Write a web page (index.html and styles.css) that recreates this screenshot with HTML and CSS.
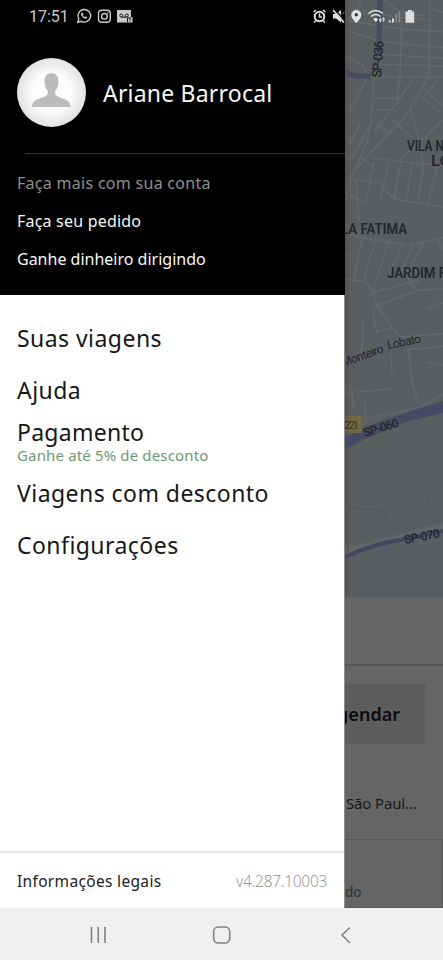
FILE: index.html
```html
<!DOCTYPE html>
<html lang="pt-BR">
<head>
<meta charset="utf-8">
<title>Menu</title>
<link rel="stylesheet" href="styles.css">
</head>
<body>
<div class="screen">
  <div class="content">
    <aside class="drawer">
      <header class="profile">
        <div class="user">
          <svg class="avatar" viewBox="0 0 69 69">
            <defs><radialGradient id="glow"><stop offset="0" stop-color="#fff"/><stop offset=".55" stop-color="#fcfcfc"/><stop offset="1" stop-color="#e2e2e2"/></radialGradient></defs>
            <circle cx="34.5" cy="34.5" r="34.5" fill="url(#glow)"/>
            <path d="M34.500 15c-4.500 0-7 3.500-7 8.500 0 4.500 1.500 7.500 3.200 9.500v3.500c-.5 1.500-5 2.800-9 4.300-4.700 1.700-6.700 4-6.700 8.200h38.500c0-4.200-2-6.500-6.700-8.200-4-1.500-8-2.800-8.500-4.300V33c1.700-2 3.200-5 3.200-9.500 0-5-2.500-8.500-7-8.500z" fill="#bcbcbc"/>
          </svg>
          <span class="name">Ariane Barrocal</span>
        </div>
        <div class="more">
          <p class="more-title">Faça mais com sua conta</p>
          <p class="order">Faça seu pedido</p>
          <p class="earn">Ganhe dinheiro dirigindo</p>
        </div>
      </header>
      <nav class="menu">
        <a class="item trips">Suas viagens</a>
        <a class="item help">Ajuda</a>
        <a class="item pay">Pagamento<small>Ganhe até 5% de desconto</small></a>
        <a class="item deals">Viagens com desconto</a>
        <a class="item settings">Configurações</a>
      </nav>
      <footer class="legal"><span class="legal-link">Informações legais</span><span class="version">v4.287.10003</span></footer>
    </aside>
    <main class="behind">
      <svg class="map" viewBox="345 0 98 597">
        <rect x="345" width="98" height="597" fill="#5b5e60"/>
        <g class="streets">
          <path d="M345 30L380 41L443 48M345 20L400 29L443 32M350 12L430 20M361 0L356 13L345 20M345 56L362 64L368 77H443M372 54L443 58M375 64L443 66M402 10L400 75L397 100M430 0L429 76M443 12L428 8M385 0L400 13L425 16"/>
          <path d="M374 76L371 122L368 140L352 176L346 200M372 98H401M376 110H395M428 78L404 118L373 150L350 176M412 80L396 104L374 132M372 122L352 158M346 118L366 80M361 122L350 144L345 130M410 108L420 142L424 176M376 125L392 133M392 120L412 138M443 120L420 142L400 160M424 88L443 106M419 94L439 112M438 80L424 96"/>
          <path d="M345 178L378 183L394 199L443 207M370 158L443 166M374 162L366 202M389 162L380 202M401 162L394 198M412 163L406 202M424 164L418 202M437 166L428 205M345 192L366 203M356 180L359 220M362 158L377 170"/>
          <path d="M345 233L371 240L409 245L443 238M345 222L357 238L362 228M363 236L354 278M376 238L363 282M389 241L375 284M402 245L388 277M413 245L399 277M424 243L407 274M438 240L443 250M352 253L346 255M345 279L367 282L378 307L399 337M374 292L420 280M378 305L420 290L443 289M408 277L417 291M370 285L377 295"/>
          <path d="M378 303L373 312L377 335M363 318L362 358M376 332L392 327M408 350L413 385L417 400M399 337L443 334M407 350L443 346M427 362L443 365M391 354L392 374M345 393L392 389M352 392L354 410M364 398L366 418M443 303L427 308"/>
        </g>
        <path d="M345 438L370 418L416 409L443 394" fill="none" stroke="#616466" stroke-width="3"/>
        <path d="M345 551Q390 540 412 534L443 526" fill="none" stroke="#626567" stroke-width="6"/>
        <g fill="none" stroke="#434661">
          <path d="M380 0L379 55M345 71Q348 75 356 76H371" stroke-width="5.500" opacity=".75"/>
          <path d="M345 557Q370 545 400 540L443 531" stroke-width="4"/>
        </g>
        <path d="M345 437L363 428L401 414L443 401V413L405 422L363 440L345 449Z" fill="#474a63"/>
        <path d="M345 507L362 509L382 510L386 516L390 524M443 480L438 490M430 494L427 505" fill="none" stroke="#4d5357" stroke-width=".8"/>
        <rect x="340" y="416" width="22" height="17" rx="2" fill="#726a3e"/>
        <rect x="345" width="4" height="597" fill="#4c5052" opacity=".4"/>
        <g class="labels">
          <text transform="translate(381 78) rotate(-86)" textLength="37" font-size="13">SP-036</text>
          <text class="district" x="407" y="151" textLength="45" lengthAdjust="spacingAndGlyphs">VILA NO</text>
          <text class="district" x="431" y="166" textLength="20" lengthAdjust="spacingAndGlyphs">LO</text>
          <text class="district" x="341" y="234" textLength="66" lengthAdjust="spacingAndGlyphs">LA FATIMA</text>
          <text class="district" x="387" y="278" textLength="59" lengthAdjust="spacingAndGlyphs">JARDIM F</text>
          <text class="street" transform="translate(343 367) rotate(-20)" textLength="44">Monteiro</text>
          <text class="street" transform="translate(388 349) rotate(-11)" textLength="34">Lobato</text>
          <text class="shield" x="344" y="429" font-size="11" textLength="15">221</text>
          <text transform="translate(365 437) rotate(-17)" font-size="12" textLength="36">SP-060</text>
          <text transform="translate(405 544) rotate(-11)" font-size="12" textLength="36">SP-070</text>
        </g>
      </svg>
      <section class="sheet">
        <div class="search"></div>
        <div class="schedule"><div class="schedule-btn"><span>Agendar</span></div></div>
        <div class="place">São Paul...</div>
        <div class="tab">do</div>
      </section>
    </main>
  </div>
  <div class="system-nav">
    <svg viewBox="0 0 443 52" fill="none" stroke="#818181" stroke-width="1.600">
      <path d="M91.500 19v16M98.300 19v16M105 19v16M350 19.500l-8 7.500 8 8"/>
      <rect x="213.700" y="19" width="16" height="16" rx="4.500"/>
    </svg>
  </div>
  <div class="status">
    <span class="clock">17:51</span>
    <svg viewBox="70 0 373 32" fill="none" stroke="#c9c9c9">
      <path d="M77.700 22.500l1.100-3.700a6.300 6.300 0 1 1 2.500 2.500z" stroke-width="1.400"/>
      <path d="M81.500 12.800c-.8 1-.5 2.500 1 4.100 1.500 1.500 3.200 2.200 4.300 1.400l.5-1-1.700-1-1 .7c-.8-.4-1.500-1.100-1.800-1.800l.7-.8-.8-1.700z" fill="#c9c9c9" stroke="none"/>
      <rect x="98.500" y="10.300" width="11.800" height="12" rx="3.300" stroke-width="1.400"/><circle cx="104.400" cy="16.300" r="2.800" stroke-width="1.400"/><circle cx="107.700" cy="13" r=".8" fill="#c9c9c9" stroke="none"/>
      <path d="M117 10h14v7h1.500v5.500H117z" fill="#c9c9c9" stroke="none"/><g stroke="#111"><circle cx="121.300" cy="15.500" r="1.500"/><circle cx="126.800" cy="15.500" r="1.500"/><path d="M121.300 17.200h5.500M127.500 22v-4h3.700"/></g><path d="M130 18.500v3" stroke="#111" stroke-width=".8"/>
      <g stroke="#dfdfdf"><circle cx="319.500" cy="16.500" r="4.800" stroke-width="2"/><path d="M319.500 13.500v3.500h2.500M313.500 12l2.500-2M325.500 12l-2.500-2M314 22.500l2-2M325 22.500l-2-2" stroke-width="1.500"/></g>
      <path d="M333 14h3l5-4v12.500l-5-4h-3z" fill="#dfdfdf" stroke="none"/><path d="M334.500 9l11 13" stroke="#111" stroke-width="1.500"/><path d="M333 10l11 12.500" stroke="#dfdfdf" stroke-width="1.700"/><path d="M342.500 14l1.800-2" stroke="#aaa"/>
      <path d="M356.300 10a5 5 0 0 0-5 5c0 3.500 5 8 5 8s5-4.500 5-8a5 5 0 0 0-5-5z" fill="#e2e2e2" stroke="none"/><circle cx="356.300" cy="14.800" r="1.800" fill="#3c3e40" stroke="none"/>
      <g stroke="#e2e2e2" stroke-width="1.500"><path d="M368.500 13.500q7-6 14.500 0M371 16.500q5-4 9.500 0"/></g><path d="M373 19q2.500-2 5 0L376 22.300zM379 20l1.300-2.500 1.400 2.500zM378.800 20.200h3l-1.500 2.400zM382 19.500h3l-1.500 2.500zM382 19l1.500-2 1.500 2z" fill="#e2e2e2" stroke="none"/>
      <g stroke-width="2"><path d="M389.700 22.500V20.500M393 22.500v-4" stroke="#dedede"/><path d="M396.200 22.500v-9M399.300 22.500v-11" stroke="#8b8d8f" stroke-width="1.500"/></g>
      <path d="M405.500 11.500h2.500V10h4v1.500h2.200v11.300h-8.700z" fill="#dedede" stroke="none"/>
    </svg>
  </div>
</div>
</body>
</html>
```
FILE: styles.css
```css
* { box-sizing: border-box; }
body { margin: 0; font-family: "Noto Sans", sans-serif; }
p { margin: 0; }
.screen { position: relative; width: 443px; height: 960px; overflow: hidden; display: flex; flex-direction: column; background: #f0f0f0; }
.content { height: 908px; display: flex; }
.drawer { width: 345px; flex: none; display: flex; flex-direction: column; background: #fff; border-right: 1px solid #8e8e8e; white-space: nowrap; }
.profile { height: 295px; margin-right: -1px; padding-top: 58px; background: #000; color: #f7f7f7; }
.user { display: flex; align-items: center; height: 69px; padding-left: 17px; gap: 17px; }
.avatar { width: 69px; height: 69px; }
.name { font-size: 23px; letter-spacing: .2px; }
.more { margin: 26px 0 0 25px; border-top: 1px solid #343434; padding-top: 10px; font-size: 16px; line-height: 38px; }
.more p { margin-left: -8px; }
.more-title { color: #8f8f8f; letter-spacing: .29px; }
.order { letter-spacing: .2px; }
.menu { flex: 1; padding: 17px 0 0 17px; color: #171717; }
.item { display: block; height: 52px; line-height: 52px; font-size: 23px; letter-spacing: .45px; }
.pay { height: 51px; line-height: 32px; letter-spacing: .27px; }
.pay small { display: block; font-size: 15px; line-height: 14px; letter-spacing: .15px; color: #6b9a70; }
.legal { height: 57px; border-top: 2px solid #e7e7e7; padding: 1px 17px 0; display: flex; justify-content: space-between; align-items: center; font-size: 15.5px; color: #222; }
.legal-link { letter-spacing: .33px; }
.version { font-weight: 300; letter-spacing: -.3px; color: #999; }
.behind { width: 98px; overflow: hidden; background: #656565; }
.map { display: block; width: 98px; height: 597px; font-family: Roboto, sans-serif; }
.streets { fill: none; stroke: #65686a; stroke-width: 1.6; }
.labels { fill: #25272d; font-weight: 500; }
.district { font-size: 14px; font-weight: 600; }
.street { font-size: 12px; font-weight: 400; }
.shield { font-weight: 400; fill: #35332a; }
.sheet { height: 311px; display: flex; flex-direction: column; color: #1a1a1a; white-space: nowrap; }
.search { height: 69px; border-bottom: 2px solid #555; }
.schedule { height: 96px; padding-top: 18px; }
.schedule-btn { width: 81px; height: 60px; background: #5d5d5d; display: flex; align-items: center; justify-content: flex-end; padding-right: 26px; overflow: hidden; font-size: 18px; font-weight: 600; color: #0c0c0c; }
.place { height: 78px; line-height: 82px; padding-left: 1px; font-size: 15px; letter-spacing: -.15px; border-bottom: 1px solid #555; }
.tab { flex: 1; padding-top: 42px; font-size: 13.5px; line-height: 20px; font-weight: 500; color: #373737; border-bottom: 1px solid #555; border-right: 1px solid #555; }
.system-nav { height: 52px; }
.system-nav svg { display: block; width: 443px; height: 52px; }
.status { position: absolute; top: 0; left: 0; width: 443px; height: 32px; display: flex; color: #c9c9c9; font-family: Roboto, sans-serif; }
.clock { width: 70px; padding-left: 29px; line-height: 33px; font-size: 16px; }
.status svg { width: 373px; height: 32px; }
```
